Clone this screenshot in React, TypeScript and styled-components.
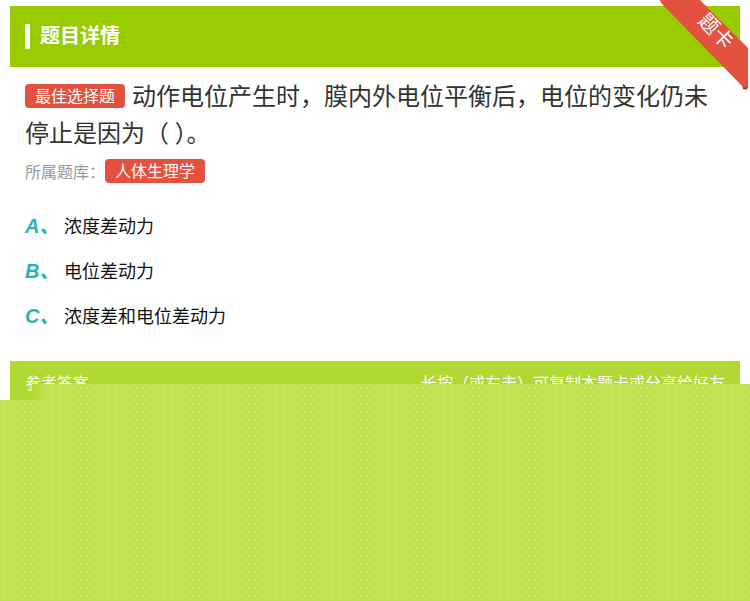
import * as React from "react";
import styled, { createGlobalStyle } from "styled-components";

const GlobalStyle = createGlobalStyle`
  html, body {
    margin: 0;
    padding: 0;
    background: #ffffff;
  }
  body {
    font-family: "Noto Sans CJK SC", "Noto Sans", "Liberation Sans", sans-serif;
    width: 750px;
    height: 601px;
    overflow: hidden;
  }
`;

const Page = styled.div`
  position: relative;
  width: 750px;
  height: 601px;
  padding: 6px 10px 0;
  box-sizing: border-box;
`;

const Header = styled.div`
  height: 61px;
  background-color: #99cc00;
  display: flex;
  align-items: center;
  padding-left: 15px;
  gap: 10px;
`;

const HeaderMark = styled.span`
  width: 5px;
  height: 25px;
  background-color: #ffffff;
`;

const HeaderTitle = styled.h1`
  margin: 0 0 3px;
  font-size: 20px;
  font-weight: 700;
  color: #ffffff;
  line-height: 1;
`;

const Ribbon = styled.svg`
  position: absolute;
  top: 0;
  right: 0;
  width: 100px;
  height: 92px;
`;

const Body = styled.div`
  padding: 9px 15px 0;
`;

const Question = styled.p`
  margin: 0;
  font-size: 24px;
  line-height: 37px;
  color: #333333;
`;

const Tag = styled.span`
  display: inline-block;
  vertical-align: 3px;
  padding: 0 10px;
  height: 24px;
  line-height: 22px;
  font-size: 16px;
  color: #ffffff;
  background-color: #e4513f;
  border-radius: 4px;
  margin-right: 7px;
`;

const Meta = styled.div`
  margin-top: 9px;
  display: flex;
  align-items: center;
  height: 24px;
  font-size: 16px;
  color: #999999;
`;

const Options = styled.ul`
  list-style: none;
  margin: 19px 0 0;
  padding: 0;
`;

const Option = styled.li`
  display: flex;
  align-items: center;
  height: 45px;
`;

const Letter = styled.span`
  width: 39px;
  font-family: "Liberation Sans", "Noto Sans CJK SC", sans-serif;
  font-size: 20px;
  font-weight: 700;
  font-style: italic;
  color: #27b6a8;
`;

const OptionText = styled.span`
  font-size: 18px;
  color: #111111;
`;

const AnswerBar = styled.div`
  margin-top: 24px;
  height: 44px;
  background-color: #b0d936;
  display: flex;
  justify-content: space-between;
  align-items: flex-start;
  padding: 10px 15px 0;
  box-sizing: border-box;
  font-size: 16px;
  line-height: 22px;
  color: #ffffff;
`;

const Overlay = styled.div`
  position: absolute;
  left: 0;
  right: 0;
  top: 384px;
  bottom: 0;
  background-color: #c0e150;
  background-image: radial-gradient(circle, #dcf08a 0.8px, transparent 1.1px);
  background-size: 7px 8px;
  clip-path: polygon(32px 0, 100% 0, 100% 100%, 0 100%, 0 16px, 32px 16px);
`;

const OverlayFade = styled.div`
  position: absolute;
  left: 32px;
  top: 384px;
  width: 14px;
  height: 16px;
  background: linear-gradient(to right, rgba(176, 217, 54, 1), rgba(192, 225, 80, 0));
`;

const options = [
  { letter: "A、", text: "浓度差动力" },
  { letter: "B、", text: "电位差动力" },
  { letter: "C、", text: "浓度差和电位差动力" },
];

export default function App() {
  return (
    <>
      <GlobalStyle />
      <Page>
        <Header>
          <HeaderMark />
          <HeaderTitle>题目详情</HeaderTitle>
        </Header>
        <Body>
          <Question>
            <Tag>最佳选择题</Tag>
            动作电位产生时，膜内外电位平衡后，电位的变化仍未停止是因为（ ）。
          </Question>
          <Meta>
            所属题库：<Tag>人体生理学</Tag>
          </Meta>
          <Options>
            {options.map((o) => (
              <Option key={o.letter}>
                <Letter>{o.letter}</Letter>
                <OptionText>{o.text}</OptionText>
              </Option>
            ))}
          </Options>
        </Body>
        <AnswerBar>
          <span>参考答案</span>
          <span>长按（或右击）可复制本题卡或分享给好友</span>
        </AnswerBar>
        <Overlay />
        <OverlayFade />
        <Ribbon viewBox="0 0 100 92">
          <path d="M88 62 L98 62 L98 86 Q98 91 93 89 Z" fill="#a8352a" />
          <path
            d="M10 0 L50 0 L98 48 L98 84 Q98 90 92 86 L14 6 Q10 2 10 0 Z"
            fill="#e4513f"
          />
          <text
            x="66"
            y="38"
            transform="rotate(45 66 31)"
            textAnchor="middle"
            fontSize="20"
            fill="#ffffff"
            fontFamily="Noto Sans CJK SC, sans-serif"
          >
            题卡
          </text>
        </Ribbon>
      </Page>
    </>
  );
}
